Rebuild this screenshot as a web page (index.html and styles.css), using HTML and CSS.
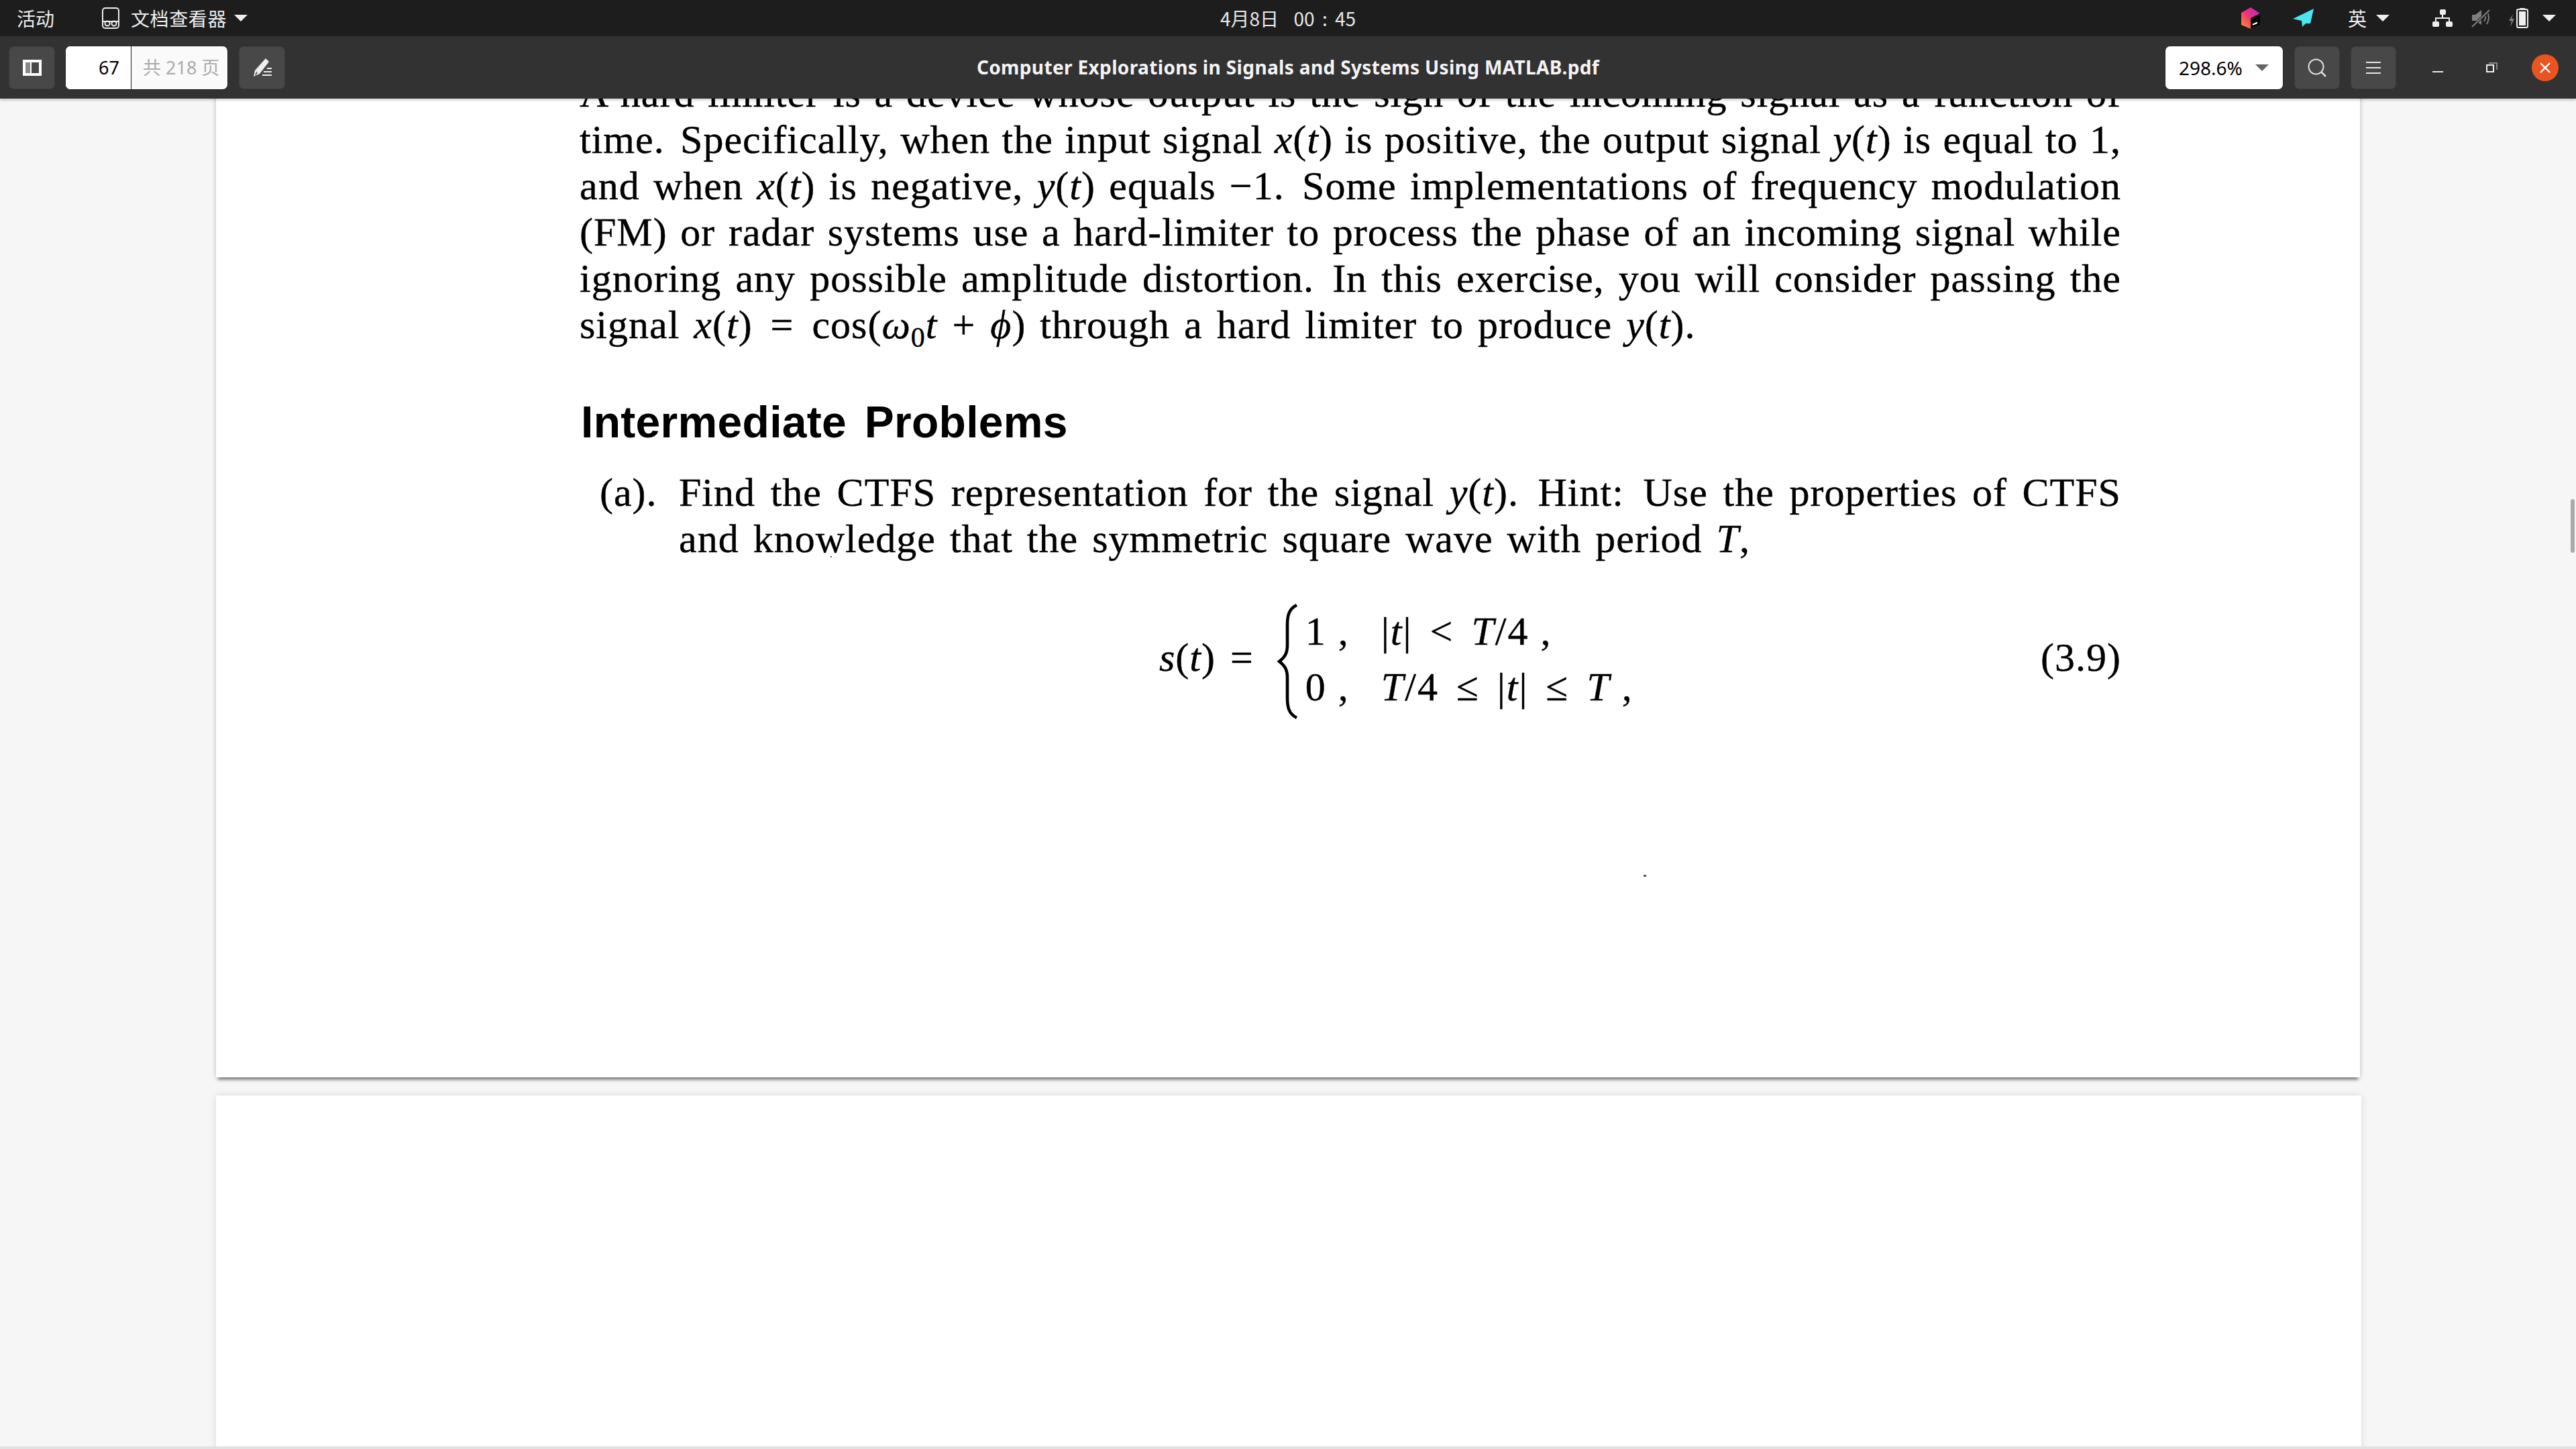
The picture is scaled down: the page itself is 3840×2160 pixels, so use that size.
FILE: index.html
```html
<!DOCTYPE html>
<html lang="en">
<head>
    <meta charset="UTF-8">
    <title>Computer Explorations in Signals and Systems Using MATLAB.pdf</title>
    <link rel="stylesheet" href="styles.css">
</head>
<body>
    <div class="topbar">
        <div class="top-left">
            <span class="activities">活动</span>
            <div class="app-menu">
                <svg class="app-icon" viewBox="0 0 26 32"><rect x="1" y="1" width="24" height="30" rx="4" fill="none" stroke="#eee" stroke-width="2"/><circle cx="8" cy="24" r="3.5" fill="none" stroke="#eee" stroke-width="2"/><circle cx="18" cy="24" r="3.5" fill="none" stroke="#eee" stroke-width="2"/><path d="M1 21h24" stroke="#eee" stroke-width="2"/></svg>
                <span class="app-name">文档查看器</span>
                <span class="caret"></span>
            </div>
        </div>
        <div class="clock">4月8日  00 : 45</div>
        <div class="tray">
            <svg class="tray-jb" viewBox="0 0 28 32">
                <defs><linearGradient id="jb" x1="0" y1="1" x2="1" y2="0"><stop offset="0" stop-color="#ff9a1f"/><stop offset=".5" stop-color="#f0307a"/><stop offset="1" stop-color="#a82bd0"/></linearGradient></defs>
                <path d="M14 0 28 9V26L14 32 0 26V8Z" fill="url(#jb)"/>
                <path d="M28 9 14 16V32L28 26Z" fill="#000"/>
                <path d="M17 24.5 24 21.5V24L17 27Z" fill="#fff"/>
            </svg>
            <svg class="tray-send" viewBox="0 0 32 28"><path d="M31 0 0 15 13 18 14 27 19 22 26 22Z" fill="#4de6ee"/></svg>
            <div class="tray-lang"><span>英</span><span class="caret"></span></div>
            <svg class="tray-net" viewBox="0 0 30 26"><rect x="11" y="0" width="9" height="8" rx="2" fill="#eee"/><rect x="0" y="18" width="10" height="8" rx="2" fill="#eee"/><rect x="20" y="18" width="10" height="8" rx="2" fill="#eee"/><path d="M15 8V13M5 18V13H25V18" fill="none" stroke="#eee" stroke-width="2"/></svg>
            <svg class="tray-vol" viewBox="0 0 28 28"><path d="M1 9H6L15 2V24L6 18H1Z" fill="#808080"/><path d="M19 8Q23 13 19 19M23 4Q29 13 23 23" fill="none" stroke="#808080" stroke-width="2"/><path d="M1 27 27 2" stroke="#1d1d1d" stroke-width="4"/><path d="M1 27 27 2" stroke="#808080" stroke-width="2"/></svg>
            <svg class="tray-bat" viewBox="0 0 30 30"><path d="M7 9 1 19H5L3 28 9 16H5Z" fill="#808080"/><path d="M17 0H25V2H17Z" fill="#eee"/><rect x="13" y="2" width="16" height="27" rx="2" fill="none" stroke="#eee" stroke-width="2"/><rect x="16" y="5" width="10" height="21" fill="#eee"/></svg>
            <span class="caret tray-caret"></span>
        </div>
    </div>

    <div class="toolbar">
        <div class="tools-left">
            <div class="tool-btn">
                <svg class="ico-side" viewBox="0 0 28 24"><rect width="28" height="24" fill="#fff"/><rect x="4" y="4" width="7" height="16" fill="#888"/><rect x="13" y="4" width="11" height="16" fill="#484848"/></svg>
            </div>
            <div class="page-field">
                <span class="page-num">67</span>
                <span class="page-total">共 218 页</span>
            </div>
            <div class="tool-btn">
                <svg class="ico-pen" viewBox="0 0 28 28"><path d="M19 0 24 5 10 23 1 27 3 18Z" fill="#eee"/><path d="M4 25 6 20" stroke="#484848" stroke-width="1.5"/><path d="M21 15H28M16 20H28M14 25H28" stroke="#eee" stroke-width="2"/></svg>
            </div>
        </div>
        <div class="doc-title">Computer Explorations in Signals and Systems Using MATLAB.pdf</div>
        <div class="tools-right">
            <div class="zoom-field"><span>298.6%</span><span class="caret caret-dark"></span></div>
            <div class="tool-btn">
                <svg class="ico-search" viewBox="0 0 28 28"><circle cx="12.5" cy="12.5" r="11" fill="none" stroke="#ddd" stroke-width="2"/><path d="M20 20 27 27" stroke="#ddd" stroke-width="2.5"/></svg>
            </div>
            <div class="tool-btn">
                <svg class="ico-menu" viewBox="0 0 22 18"><path d="M0 1H22M0 9H22M0 17H22" stroke="#e8e8e8" stroke-width="2"/></svg>
            </div>
            <div class="win-btns">
                <span class="win-min"></span>
                <svg class="win-restore" viewBox="0 0 17 15"><path d="M4 2V0H17V11H15V2Z" fill="#888"/><rect x="1" y="4" width="10" height="10" fill="none" stroke="#eee" stroke-width="2"/></svg>
                <div class="win-close"><svg viewBox="0 0 16 16"><path d="M1 1 15 15M15 1 1 15" stroke="#fff" stroke-width="2.4"/></svg></div>
            </div>
        </div>
    </div>

    <main class="viewer">
        <section class="page page-first">
            <div class="ln">A hard limiter is a device whose output is the sign of the incoming signal as a function of</div>
            <div class="ln">time.<span class="sent"></span> Specifically, when the input signal <i>x</i>(<i>t</i>) is positive, the output signal <i>y</i>(<i>t</i>) is equal to 1,</div>
            <div class="ln">and when <i>x</i>(<i>t</i>) is negative, <i>y</i>(<i>t</i>) equals −1.<span class="sent"></span> Some implementations of frequency modulation</div>
            <div class="ln">(FM) or radar systems use a hard-limiter to process the phase of an incoming signal while</div>
            <div class="ln">ignoring any possible amplitude distortion.<span class="sent"></span> In this exercise, you will consider passing the</div>
            <div class="ln ln-short">signal <i>x</i>(<i>t</i>) <span class="rel">=</span> cos(<i>ω</i><sub>0</sub><i>t</i> <span class="rel-tight">+</span> <i>ϕ</i>) through a hard limiter to produce <i>y</i>(<i>t</i>).</div>

            <h2 class="heading">Intermediate Problems</h2>

            <div class="problem">
                <span class="problem-tag">(a).</span>
                <div class="problem-body">
                    <div class="ln">Find the CTFS representation for the signal <i>y</i>(<i>t</i>).<span class="sent"></span> Hint:<span class="sent"></span> Use the properties of CTFS</div>
                    <div class="ln ln-short">and knowledge that the symmetric square wave with period <i>T</i>,</div>
                </div>
            </div>

            <div class="equation">
                <div class="eq-lhs"><i>s</i>(<i>t</i>) <span class="rel">=</span></div>
                <svg class="brace" viewBox="0 0 30 172"><path d="M29 2C17 8 15 18 15 32V62C15 74 11 80 3 86 11 92 15 98 15 110V140C15 154 17 164 29 170" fill="none" stroke="#000" stroke-width="4.6"/></svg>
                <div class="cases">
                    <span>1 ,</span><span>|<i>t</i>| <span class="rel">&lt;</span> <i>T</i>/4 ,</span>
                    <span>0 ,</span><span><i>T</i>/4 <span class="rel">≤</span> |<i>t</i>| <span class="rel">≤</span> <i>T</i> ,</span>
                </div>
                <div class="eq-num">(3.9)</div>
            </div>
            <span class="speck speck-a"></span>
            <span class="speck speck-b"></span>
        </section>
        <section class="page page-next"></section>
        <div class="scroll-thumb"></div>
    </main>
    <div class="win-edge"></div>
</body>
</html>
```

FILE: styles.css
```css
* {
  box-sizing: border-box;
}

html, body {
  margin: 0;
  height: 100%;
}

body {
  display: flex;
  flex-direction: column;
  height: 2160px;
  overflow: hidden;
  background-color: #f6f6f6;
  font-family: "Noto Sans", "Noto Sans CJK SC", sans-serif;
}

/* shell top bar */
.topbar {
  height: 54px;
  flex: none;
  display: grid;
  grid-template-columns: 1fr auto 1fr;
  align-items: center;
  padding: 0 25px;
  background-color: #1d1d1d;
  color: #eee;
  font-family: "Noto Sans CJK SC", "Noto Sans", sans-serif;
  font-size: 28px;
}

.top-left {
  display: flex;
  align-items: center;
}

.activities {
  margin-right: 71px;
}

.app-menu {
  display: flex;
  align-items: center;
}

.app-icon {
  width: 26px;
  height: 32px;
  margin-right: 17px;
}

.app-name {
  letter-spacing: 0.6px;
}

.caret {
  display: inline-block;
  width: 0;
  height: 0;
  border-left: 10px solid transparent;
  border-right: 10px solid transparent;
  border-top: 10px solid #eee;
}

.app-menu .caret {
  margin-left: 11px;
}

.clock {
  white-space: pre;
  word-spacing: 5px;
  font-size: 28px;
  color: #e8e8e8;
}

.tray {
  display: flex;
  align-items: center;
  justify-content: flex-end;
  height: 100%;
  padding-right: 5px;
}

.tray-jb {
  width: 28px;
  height: 32px;
  margin-right: 49px;
}

.tray-send {
  width: 32px;
  height: 28px;
  margin-right: 50px;
  filter: blur(0.7px);
}

.tray-lang {
  display: flex;
  align-items: center;
  margin-right: 64px;
}

.tray-lang .caret {
  margin-left: 14px;
}

.tray-net {
  width: 30px;
  height: 26px;
  margin-right: 28px;
}

.tray-vol {
  width: 28px;
  height: 28px;
  margin-right: 27px;
}

.tray-bat {
  width: 30px;
  height: 30px;
  margin-right: 21px;
}

/* header bar of the window */
.toolbar {
  position: relative;
  z-index: 2;
  height: 93px;
  flex: none;
  display: grid;
  grid-template-columns: 1fr auto 1fr;
  align-items: center;
  padding: 0 26px;
  background-color: #333233;
  box-shadow: 0 3px 3px rgba(0, 0, 0, 0.15);
}

.tools-left, .tools-right {
  display: flex;
  align-items: center;
}

.tools-left {
  gap: 15px;
  margin-left: -13px;
}

.tools-right {
  justify-content: flex-end;
  gap: 16px;
}

.tool-btn {
  width: 68px;
  height: 64px;
  display: flex;
  align-items: center;
  justify-content: center;
  background-color: #484848;
  border: 1px solid #3a3a3a;
  border-radius: 7px;
}

.tools-left .tool-btn {
  width: 69px;
}

.ico-side {
  width: 28px;
  height: 24px;
}

.ico-pen {
  width: 28px;
  height: 28px;
}

.ico-search {
  width: 28px;
  height: 28px;
}

.ico-menu {
  width: 22px;
  height: 18px;
}

.page-field {
  width: 243px;
  height: 66px;
  margin-right: 1px;
  display: flex;
  overflow: hidden;
  background-color: #fafafa;
  border: 1px solid #222;
  border-radius: 8px;
  font-size: 27px;
  line-height: 64px;
  white-space: nowrap;
}

.page-num {
  flex: none;
  width: 98px;
  padding-right: 17px;
  text-align: right;
  color: #000;
  background-color: #fff;
  border-right: 1px solid #222;
}

.page-total {
  padding-left: 17px;
  color: #aaa;
}

.zoom-field {
  width: 177px;
  height: 66px;
  display: flex;
  align-items: center;
  justify-content: space-between;
  padding: 0 21px 0 20px;
  background-color: #fff;
  border: 1px solid #222;
  border-radius: 8px;
  color: #000;
  font-size: 28px;
}

.caret-dark {
  border-top-color: #666;
}

.doc-title {
  margin-bottom: 2px;
  color: #f4f4f4;
  font-weight: 700;
  font-size: 28px;
  letter-spacing: 0.36px;
  white-space: nowrap;
}

.win-btns {
  display: flex;
  align-items: center;
  margin-left: 38px;
}

.win-min {
  display: block;
  width: 16px;
  height: 2px;
  margin-top: 12px;
  margin-right: 64px;
  background-color: #e8e8e8;
}

.win-restore {
  width: 17px;
  height: 15px;
  margin-right: 51px;
}

.win-close {
  width: 40px;
  height: 40px;
  display: flex;
  align-items: center;
  justify-content: center;
  background-color: #e95420;
  border-radius: 50%;
}

.win-close svg {
  width: 16px;
  height: 16px;
}

/* document area */
.viewer {
  position: relative;
  flex: 1;
  overflow: hidden;
  padding-left: 322px;
}

.page {
  background-color: #fff;
  box-shadow: 0 0 10px rgba(0, 0, 0, 0.12);
}

.page-first {
  position: relative;
  width: 3196px;
  height: 1501px;
  margin-top: -42px;
  padding: 0 356px 0 542px;
  font-family: "Liberation Serif", serif;
  font-size: 60px;
  line-height: 69px;
  letter-spacing: 1px;
  color: #000;
  -webkit-text-stroke: 0.4px #000;
  box-shadow: 0 6px 5px -3px rgba(0, 0, 0, 0.5), 0 0 8px rgba(0, 0, 0, 0.18);
}

.page-next {
  width: 3198px;
  height: 600px;
  margin-top: 27px;
}

.ln {
  white-space: nowrap;
  text-align: justify;
  text-align-last: justify;
}

.ln-short {
  text-align-last: left;
  word-spacing: 5px;
}

.sent {
  margin-left: 6px;
}

sub {
  font-size: 42px;
  line-height: 0;
}

.heading {
  margin: 74px 0 35px 2px;
  font-family: "Liberation Sans", sans-serif;
  font-size: 66px;
  line-height: 72px;
  font-weight: 700;
  letter-spacing: 0.3px;
  word-spacing: 8px;
  -webkit-text-stroke: 0;
}

.problem {
  display: flex;
  padding-left: 30px;
}

.problem-tag {
  width: 118px;
  flex: none;
}

.problem-body {
  flex: 1;
  min-width: 0;
}

.equation {
  display: flex;
  align-items: flex-start;
  margin-top: 62px;
  padding-left: 864px;
}

.eq-lhs, .eq-num {
  line-height: 160px;
  white-space: nowrap;
}

.rel {
  margin: 0 6px;
}

.rel-tight {
  margin: 0 1px;
}

.brace {
  width: 30px;
  height: 172px;
  margin-left: 29px;
  flex: none;
}

.cases {
  display: grid;
  grid-template-columns: 113px auto;
  grid-auto-rows: 83px;
  margin-left: 12px;
  line-height: 83px;
  letter-spacing: 2px;
  white-space: nowrap;
}

.cases .rel {
  margin: 0 9px;
}

.eq-num {
  margin-left: auto;
}

.speck {
  position: absolute;
  background-color: #555;
}

.speck-a {
  left: 2128px;
  top: 1199px;
  width: 4px;
  height: 3px;
}

.speck-b {
  left: 916px;
  top: 724px;
  width: 2px;
  height: 2px;
}

.scroll-thumb {
  position: absolute;
  top: 597px;
  right: 2px;
  width: 6px;
  height: 80px;
  background-color: #aaa;
  border-radius: 3px;
}

.win-edge {
  flex: none;
  height: 4px;
  background-color: #e2e2e2;
}
```
